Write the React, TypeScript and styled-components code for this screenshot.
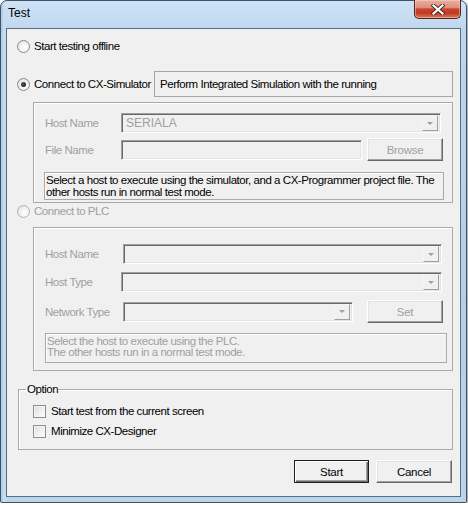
import React from 'react';
import styled, { createGlobalStyle, css } from 'styled-components';

const GlobalStyle = createGlobalStyle`
  body {
    margin: 0;
    background: #ffffff;
    font-family: "Liberation Sans", Arial, sans-serif;
  }
`;

const Window = styled.div`
  box-sizing: border-box;
  width: 467px;
  height: 503px;
  padding: 0 5px 5px 5px;
  border: 1px solid #3f5268;
  border-radius: 7px 7px 2px 2px;
  background:
    linear-gradient(90deg, #a9c8e6 0px, #c9def3 3px, rgba(255, 255, 255, 0) 6px),
    linear-gradient(180deg, #cfe3f6 0%, #bdd6ef 6%, #b6cfe9 60%, #bcd5ee 100%);
  box-shadow: 2px 2px 3px rgba(0, 0, 0, 0.35);
  display: flex;
  flex-direction: column;
`;

const TitleBar = styled.div`
  height: 27px;
  display: flex;
  justify-content: space-between;
  align-items: flex-start;
`;

const Title = styled.div`
  padding: 5px 0 0 2px;
  font-size: 12px;
  line-height: 15px;
  color: #000;
`;

const CloseButton = styled.div`
  box-sizing: border-box;
  width: 47px;
  height: 19px;
  margin-top: -1px;
  border: 1px solid #5a2118;
  border-top: none;
  border-radius: 0 0 5px 5px;
  background: linear-gradient(
    180deg,
    #eab0a3 0%,
    #dd8e7c 42%,
    #c8472f 50%,
    #c0391f 72%,
    #d97a5c 100%
  );
  box-shadow: inset 0 0 0 1px rgba(255, 220, 210, 0.45);
  display: flex;
  align-items: center;
  justify-content: center;
`;

const Client = styled.div`
  box-sizing: border-box;
  height: 469px;
  border: 1px solid #5c6d80;
  background: #f0f0f0;
  padding: 0 7px 0 10px;
  display: flex;
  flex-direction: column;
  font-size: 11.5px;
  letter-spacing: -0.45px;
  color: #000;
`;

const RadioRow = styled.div<{ $top: number; $height?: number }>`
  margin-top: ${(p) => p.$top}px;
  height: ${(p) => p.$height ?? 14}px;
  display: flex;
  align-items: center;
`;

const Radio = styled.span<{ $checked?: boolean; $disabled?: boolean }>`
  box-sizing: border-box;
  width: 13px;
  height: 13px;
  border-radius: 50%;
  border: 1px solid ${(p) => (p.$disabled ? '#b4b4b4' : '#8a8a8a')};
  background: radial-gradient(circle at 60% 60%, #ffffff 0%, #f2f2f2 45%, #d6d6d6 100%);
  display: flex;
  align-items: center;
  justify-content: center;
  flex: none;

  ${(p) =>
    p.$checked &&
    css`
      &::after {
        content: '';
        width: 5px;
        height: 5px;
        border-radius: 50%;
        background: radial-gradient(circle at 40% 40%, #5a5a5a, #0c0c0c);
      }
    `}
`;

const OptionText = styled.span<{ $disabled?: boolean }>`
  margin-left: 4px;
  line-height: 13px;
  white-space: nowrap;
  color: ${(p) => (p.$disabled ? '#a0a0a0' : '#000')};
`;

const InfoBox = styled.div`
  box-sizing: border-box;
  margin-left: auto;
  width: 299px;
  height: 26px;
  border: 1px solid #a6a6a6;
  padding: 0 0 0 5px;
  display: flex;
  align-items: center;
  white-space: nowrap;
`;

const Group = styled.div<{ $top: number; $height: number; $padTop: number }>`
  box-sizing: border-box;
  margin: ${(p) => p.$top}px 0 0 16px;
  height: ${(p) => p.$height}px;
  border: 1px solid #a9a9a9;
  box-shadow: inset 1px 1px 0 #ffffff;
  padding: ${(p) => p.$padTop}px 0 0 11px;
  display: flex;
  flex-direction: column;
`;

const FieldRow = styled.div<{ $top?: number; $height?: number }>`
  margin-top: ${(p) => p.$top ?? 0}px;
  height: ${(p) => p.$height ?? 20}px;
  display: flex;
  align-items: center;
`;

const FieldLabel = styled.span<{ $width: number }>`
  width: ${(p) => p.$width}px;
  flex: none;
  color: #a0a0a0;
  white-space: nowrap;
`;

const sunken = css`
  box-sizing: border-box;
  height: 20px;
  border: 1px solid;
  border-color: #a0a0a0 #ffffff #ffffff #a0a0a0;
  box-shadow: inset 1px 1px 0 #696969, inset -1px -1px 0 #e3e3e3;
  background: #f0f0f0;
`;

const Combo = styled.div<{ $width: number }>`
  ${sunken};
  width: ${(p) => p.$width}px;
  flex: none;
  display: flex;
  align-items: center;
  padding: 2px 2px 2px 4px;
`;

const ComboValue = styled.span`
  flex: 1;
  color: #a0a0a0;
  font-size: 12px;
  letter-spacing: 0;
`;

const DropButton = styled.span`
  box-sizing: border-box;
  width: 16px;
  height: 16px;
  margin-left: auto;
  border: 1px solid;
  border-color: #f4f4f4 #a0a0a0 #a0a0a0 #f4f4f4;
  background: #f0f0f0;
  display: flex;
  align-items: center;
  justify-content: center;

  &::after {
    content: '';
    border-left: 3px solid transparent;
    border-right: 3px solid transparent;
    border-top: 3px solid #a0a0a0;
  }
`;

const TextField = styled.div<{ $width: number }>`
  ${sunken};
  width: ${(p) => p.$width}px;
  flex: none;
`;

const Button = styled.button<{ $width: number; $gap?: number; $isDefault?: boolean }>`
  box-sizing: border-box;
  width: ${(p) => p.$width}px;
  height: 23px;
  margin-left: ${(p) => p.$gap ?? 0}px;
  flex: none;
  padding: 0;
  font-family: "Liberation Sans", Arial, sans-serif;
  font-size: 11.5px;
  letter-spacing: -0.3px;
  color: #000;
  background: #f0f0f0;
  border: 1px solid;
  border-color: #ffffff #696969 #696969 #ffffff;
  box-shadow: inset -1px -1px 0 #a0a0a0, inset 1px 1px 0 #e3e3e3;
  border-radius: 0;

  &:disabled {
    color: #a0a0a0;
  }

  ${(p) =>
    p.$isDefault &&
    css`
      border: 1px solid #1e1e1e;
      box-shadow: inset 1px 1px 0 #ffffff, inset -1px -1px 0 #696969,
        inset -2px -2px 0 #a0a0a0;
    `}
`;

const Note = styled.div<{ $top: number; $left: number; $width: number; $height: number; $disabled?: boolean }>`
  box-sizing: border-box;
  margin: ${(p) => p.$top}px 0 0 ${(p) => p.$left}px;
  width: ${(p) => p.$width}px;
  height: ${(p) => p.$height}px;
  border: 1px solid #a9a9a9;
  box-shadow: inset 1px 1px 0 #ffffff;
  padding: ${(p) => (p.$disabled ? 2 : 1)}px 0 0 1px;
  line-height: ${(p) => (p.$disabled ? 11 : 12)}px;
  white-space: nowrap;
  color: ${(p) => (p.$disabled ? '#a0a0a0' : '#000')};
`;

const OptionSet = styled.fieldset`
  box-sizing: border-box;
  margin: 12px 0 0 1px;
  height: 67px;
  padding: 0;
  border: 1px solid #a9a9a9;
  box-shadow: inset 1px 1px 0 #ffffff;
  min-width: 0;
`;

const Legend = styled.legend`
  margin-left: 7px;
  padding: 0 1px;
  line-height: 13px;
`;

const CheckRow = styled.div<{ $top: number }>`
  margin: ${(p) => p.$top}px 0 0 14px;
  height: 13px;
  display: flex;
  align-items: center;
`;

const CheckBox = styled.span`
  box-sizing: border-box;
  width: 13px;
  height: 13px;
  flex: none;
  border: 1px solid #8e8f8f;
  background: linear-gradient(135deg, #dcdcdc 0%, #eeeeee 50%, #ffffff 100%);
  box-shadow: inset 0 0 0 1px #f4f4f4;
`;

const CheckText = styled.span`
  margin-left: 5px;
  line-height: 13px;
  white-space: nowrap;
`;

const ButtonBar = styled.div`
  margin: 10px 1px 0 0;
  display: flex;
  justify-content: flex-end;
`;

const CloseGlyph = () => (
  <svg width="14" height="11" viewBox="0 0 14 11">
    <path d="M2.5 1.5 L11.5 9.5 M11.5 1.5 L2.5 9.5" stroke="#4a2a25" strokeWidth="4" strokeLinecap="square" />
    <path d="M2.5 1.5 L11.5 9.5 M11.5 1.5 L2.5 9.5" stroke="#ffffff" strokeWidth="2.2" strokeLinecap="square" />
  </svg>
);

const App: React.FC = () => {
  return (
    <>
      <GlobalStyle />
      <Window>
        <TitleBar>
          <Title>Test</Title>
          <CloseButton>
            <CloseGlyph />
          </CloseButton>
        </TitleBar>
        <Client>
          <RadioRow $top={10}>
            <Radio />
            <OptionText>Start testing offline</OptionText>
          </RadioRow>

          <RadioRow $top={18} $height={26}>
            <Radio $checked />
            <OptionText>Connect to CX-Simulator</OptionText>
            <InfoBox>Perform Integrated Simulation with the running</InfoBox>
          </RadioRow>

          <Group $top={5} $height={101} $padTop={10}>
            <FieldRow>
              <FieldLabel $width={76}>Host Name</FieldLabel>
              <Combo $width={320}>
                <ComboValue>SERIALA</ComboValue>
                <DropButton />
              </Combo>
            </FieldRow>
            <FieldRow $top={6} $height={21}>
              <FieldLabel $width={76}>File Name</FieldLabel>
              <TextField $width={241} />
              <Button $width={76} $gap={5} disabled>
                Browse
              </Button>
            </FieldRow>
            <Note $top={12} $left={-1} $width={400} $height={28}>
              Select a host to execute using the simulator, and a CX-Programmer project file. The
              <br />
              other hosts run in normal test mode.
            </Note>
          </Group>

          <RadioRow $top={1}>
            <Radio $disabled />
            <OptionText $disabled>Connect to PLC</OptionText>
          </RadioRow>

          <Group $top={9} $height={144} $padTop={16}>
            <FieldRow>
              <FieldLabel $width={78}>Host Name</FieldLabel>
              <Combo $width={319}>
                <DropButton />
              </Combo>
            </FieldRow>
            <FieldRow $top={8}>
              <FieldLabel $width={76}>Host Type</FieldLabel>
              <Combo $width={321}>
                <DropButton />
              </Combo>
            </FieldRow>
            <FieldRow $top={8} $height={23}>
              <FieldLabel $width={78}>Network Type</FieldLabel>
              <Combo $width={230}>
                <DropButton />
              </Combo>
              <Button $width={76} $gap={14} disabled>
                Set
              </Button>
            </FieldRow>
            <Note $top={10} $left={0} $width={402} $height={30} $disabled>
              Select the host to execute using the PLC.
              <br />
              The other hosts run in a normal test mode.
            </Note>
          </Group>

          <OptionSet>
            <Legend>Option</Legend>
            <CheckRow $top={9}>
              <CheckBox />
              <CheckText>Start test from the current screen</CheckText>
            </CheckRow>
            <CheckRow $top={7}>
              <CheckBox />
              <CheckText>Minimize CX-Designer</CheckText>
            </CheckRow>
          </OptionSet>

          <ButtonBar>
            <Button $width={75} $isDefault>
              Start
            </Button>
            <Button $width={76} $gap={7}>
              Cancel
            </Button>
          </ButtonBar>
        </Client>
      </Window>
    </>
  );
};

export default App;
